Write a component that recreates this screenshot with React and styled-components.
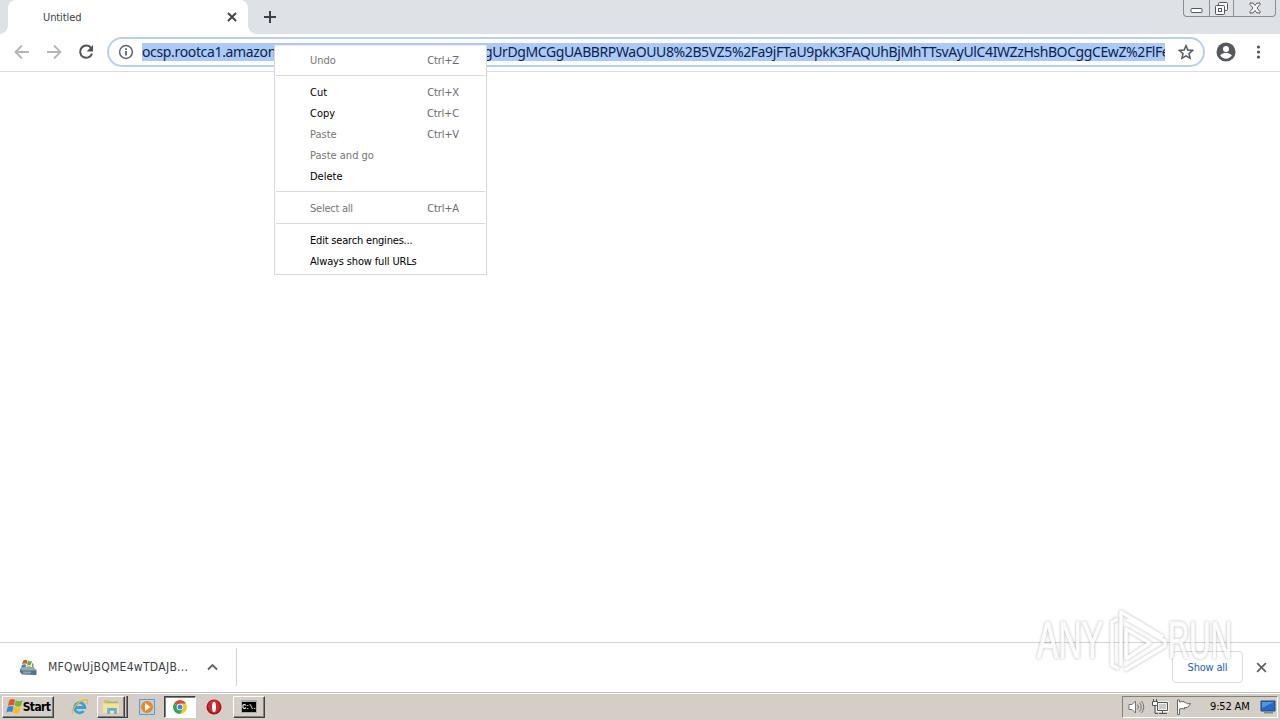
import React from "react";
import styled, { createGlobalStyle } from "styled-components";

const GlobalStyle = createGlobalStyle`
  * { box-sizing: border-box; }
  body { margin: 0; background: #fff; overflow: hidden; }
`;
const Screen = styled.div`
  position: relative;
  width: 1280px;
  height: 720px;
  display: flex;
  flex-direction: column;
  overflow: hidden;
  background: #fff;
  font-family: "DejaVu Sans Condensed", "DejaVu Sans", sans-serif;
  font-stretch: condensed;
  font-size: 11px;
  color: #000;
  svg { display: block; flex: none; }
`;
const Label = styled.span`
  white-space: pre;
  letter-spacing: ${(p) => p.$track || 0}px;
`;

const TabStrip = styled.header`
  height: 34px;
  flex: none;
  display: flex;
  padding-left: 8px;
  background: #dee1e6;
`;
const Tab = styled.div`
  width: 240px;
  display: flex;
  align-items: center;
  justify-content: space-between;
  padding: 0 11px 0 35px;
  background: #fff;
  border-radius: 8px 8px 0 0;
  color: #3c4043;
  position: relative;
  &::before, &::after {
    content: "";
    position: absolute;
    bottom: 0;
    width: 8px;
    height: 8px;
  }
  &::before { left: -8px; background: radial-gradient(circle at 0 0, #dee1e6 7.5px, #fff 8px); }
  &::after { right: -8px; background: radial-gradient(circle at 100% 0, #dee1e6 7.5px, #fff 8px); }
`;
const NewTab = styled.div`
  margin: 10px 0 0 15px;
`;
const WindowButtons = styled.div`
  display: flex;
  width: 93px;
  height: 17px;
  margin: 0 4px 0 auto;
  border: 1px solid #8a8d93;
  border-top: 0;
  border-radius: 0 0 4px 4px;
`;
const WindowButton = styled.div`
  width: ${(p) => p.$w}px;
  display: flex;
  align-items: center;
  justify-content: center;
  & + & { border-left: 1px solid #8a8d93; }
`;

const Toolbar = styled.div`
  height: 38px;
  flex: none;
  display: flex;
  align-items: center;
  padding: 0 12px 1px 14px;
  border-bottom: 1px solid #dcdee1;
  background: #fff;
`;
const NavIcons = styled.div`
  display: flex;
  gap: 16px;
  width: 93px;
`;
const Omnibox = styled.div`
  width: 1098px;
  height: 30px;
  display: flex;
  align-items: center;
  padding: 0 9px 0 9px;
  border: 2px solid #b9cff0;
  border-radius: 15px;
`;
const Url = styled.div`
  width: 1023px;
  height: 18px;
  margin: 0 13px 0 8px;
  overflow: hidden;
  display: flex;
  background: #accaf8;
  color: #0b1f48;
  font-family: "Noto Sans", sans-serif;
  font-size: 14px;
  line-height: 17px;
`;
const UrlPart = styled.span`
  flex: none;
  width: ${(p) => p.$w}px;
  overflow: hidden;
  white-space: pre;
  letter-spacing: ${(p) => p.$track}px;
`;
const ToolbarEnd = styled.div`
  display: flex;
  align-items: center;
  gap: 12px;
  margin-left: 11px;
`;

const Menu = styled.nav`
  position: absolute;
  left: 274px;
  top: 45px;
  width: 213px;
  height: 230px;
  background: #fff;
  border: 1px solid #d6d8db;
  border-top-color: #e9edf5;
  padding-top: 4px;
`;
const MenuItem = styled.div`
  height: 21px;
  display: flex;
  align-items: center;
  justify-content: space-between;
  padding: 0 27px 0 35px;
  color: ${(p) => (p.$off ? "#757575" : "#000")};
`;
const Shortcut = styled(Label)`
  color: #6b6b6b;
`;
const Rule = styled.div`
  height: 1px;
  margin: 4px 1px 6px;
  background: #d8dadd;
`;

const Page = styled.main`
  flex: 1;
`;
const Shelf = styled.section`
  height: 50px;
  flex: none;
  display: flex;
  align-items: center;
  border-top: 1px solid #d3d5d8;
  padding: 0 13px 1px 20px;
`;
const Download = styled.div`
  width: 217px;
  height: 38px;
  display: flex;
  align-items: center;
  border-right: 1px solid #d3d5d8;
  color: #3c4043;
  font-size: 12px;
`;
const FileName = styled(Label)`
  width: 170px;
  flex: none;
  padding-left: 11px;
`;
const ShowAll = styled.div`
  width: 71px;
  height: 32px;
  margin: 0 13px 0 auto;
  display: flex;
  align-items: center;
  justify-content: center;
  border: 1px solid #dadce0;
  border-radius: 4px;
  color: #1a5fc8;
`;

const Taskbar = styled.footer`
  height: 28px;
  flex: none;
  display: flex;
  align-items: center;
  padding: 2px 2px 2px 2px;
  background: #d4cec6;
  border-top: 1px solid #c2beb9;
  box-shadow: inset 0 1px #fff;
`;
const Raised = styled.div`
  width: ${(p) => p.$w}px;
  height: 22px;
  margin-left: ${(p) => p.$gap || 0}px;
  display: flex;
  align-items: center;
  justify-content: center;
  background: ${(p) => (p.$pressed ? "#fff" : "#d4cec6")};
  border: 1px solid;
  border-color: ${(p) => (p.$pressed ? "#404040 #fff #fff #404040" : "#fff #404040 #404040 #fff")};
  box-shadow: ${(p) => (p.$pressed ? "inset 1px 1px #808080" : "inset -1px -1px #808080")};
`;
const Stack = styled.div`
  width: 3px;
  height: 22px;
  border-right: 1px solid #404040;
  border-bottom: 1px solid #404040;
  box-shadow: inset -1px 0 #808080;
`;
const StartText = styled(Label)`
  font-weight: bold;
  font-size: 12px;
`;
const Bare = styled.div`
  margin-left: ${(p) => p.$gap}px;
`;
const Tray = styled.div`
  width: 156px;
  height: 22px;
  margin-left: auto;
  display: flex;
  align-items: center;
  padding-left: 5px;
  border: 1px solid;
  border-color: #808080 #fff #fff #808080;
`;
const Clock = styled(Label)`
  width: 41px;
  margin: 0 9px 0 17px;
`;

const Watermark = styled.div`
  position: absolute;
  left: 1037px;
  top: 607px;
  width: 200px;
  height: 67px;
  display: flex;
  align-items: center;
  opacity: 0.8;
  filter: drop-shadow(0 0 1.5px rgba(0, 0, 0, 0.36));
`;
const Word = styled.span`
  width: ${(p) => p.$w}px;
  flex: none;
  font: 51px/67px "Liberation Sans", sans-serif;
  color: #fcfcfc;
  -webkit-text-stroke: 1px #fcfcfc;
  white-space: nowrap;
  transform: scaleX(${(p) => p.$sx});
  transform-origin: 0 50%;
`;

const Close = ({ s = 9, c = "#3c4043", w = 1.8 }) => (
  <svg width={s} height={s} viewBox="0 0 10 10"><path d="M1 1l8 8M9 1l-8 8" stroke={c} strokeWidth={w} /></svg>
);
const Arrow = ({ flip }) => (
  <svg width="16" height="16" viewBox="0 0 16 16" fill="none" stroke="#b4b6b9" strokeWidth="1.8">
    <path d={flip ? "M1 8h13M8 1.5L14.5 8 8 14.5" : "M15 8H2M8 1.5L1.5 8 8 14.5"} />
  </svg>
);
const Reload = () => (
  <svg width="16" height="16" viewBox="0 0 16 16">
    <path d="M13.2 4.1A6.1 6.1 0 1 0 14 9.7" fill="none" stroke="#505357" strokeWidth="2" />
    <path d="M15 1v6.4H8.6z" fill="#505357" />
  </svg>
);
const Info = () => (
  <svg width="16" height="16" viewBox="0 0 16 16">
    <circle cx="8" cy="8" r="6.4" fill="none" stroke="#5f6368" strokeWidth="1.5" />
    <path d="M8 7v4.500M8 4.200v1.700" stroke="#5f6368" strokeWidth="1.800" />
  </svg>
);
const Star = () => (
  <svg width="16" height="16" viewBox="0 0 16 16">
    <path d="M8 1.700l1.800 4.400 4.800.400-3.600 3.100 1.100 4.700L8 11.800l-4.100 2.500L5 9.600 1.400 6.500l4.800-.400z" fill="none" stroke="#54575b" strokeWidth="1.500" />
  </svg>
);
const Avatar = () => (
  <svg width="20" height="20" viewBox="0 0 20 20">
    <circle cx="10" cy="10" r="9.500" fill="#55585d" />
    <circle cx="10" cy="7" r="3" fill="#fff" />
    <path d="M4.200 13.600c1.100-2 3.900-2.800 5.800-2.800s4.700.800 5.800 2.800A7 7 0 0 1 10 16.700a7 7 0 0 1-5.800-3.100z" fill="#fff" />
  </svg>
);
const Dots = () => (
  <svg width="20" height="16" viewBox="0 0 20 16" fill="#505357">
    <circle cx="10.500" cy="3" r="1.600" /><circle cx="10.500" cy="8" r="1.600" /><circle cx="10.500" cy="13" r="1.600" />
  </svg>
);
const Flag = ({ s }) => (
  <svg width={s} height={s} viewBox="0 0 18 18">
    <path d="M3.500 2.500Q6.500 0 9.500 2L8.200 8Q5 6.500 2 8.500z" fill="#e2562b" />
    <path d="M10.500 2.500Q13.500 4.500 17.500 2.500L15.700 8.500Q12 10 9 8z" fill="#75b52f" />
    <path d="M1.700 9.500Q5 7.500 8 9.200L6.500 15Q3.500 13.500 .3 15.500z" fill="#3984d2" />
    <path d="M8.900 9.300Q12 11.200 15.500 9.500L13.800 15.500Q10.500 17.500 7.300 15z" fill="#f3bd25" />
  </svg>
);
const Installer = () => (
  <svg width="17" height="17" viewBox="0 0 17 17">
    <path d="M3 2q2-2 4.500-.500L6.500 5Q4.500 4 2 5.500z" fill="#d65b35" />
    <path d="M8 1.500q2 1.500 4 .500L11 5.500q-2 1-4 0z" fill="#65ac3b" />
    <path d="M2 6q2-1.500 4.300-.300L5.300 9 1 9.500z" fill="#3b87cb" />
    <path d="M7 6q2 1.200 4 .300L10 9.500H6z" fill="#e9b443" />
    <path d="M12 4l1.500 1v5H12z" fill="#7b9a62" />
    <path d="M0 10l3-2h10l3.500 3.500V16L2 15.500 0 13z" fill="#51718b" />
    <path d="M0 10l3-2h10l3 3.500H2z" fill="#93aab7" />
    <path d="M3 12.500h8v2H3z" fill="#8ba7b9" />
  </svg>
);
const Explorer = () => (
  <svg width="17" height="17" viewBox="0 0 16 16">
    <path d="M1 2h5l1 1h7v10H1z" fill="#d9bb65" /><path d="M3 4h11v6H3z" fill="#82bc93" />
    <path d="M0 5h15v9H0z" fill="#f5e39d" /><path d="M4 15V9.500h9V15h-2.500v-3h-4v3z" fill="#66afd1" />
  </svg>
);
const IE = () => (
  <svg width="18" height="18" viewBox="0 0 18 18" fill="none">
    <path d="M4.500 9.500h9.300A5.100 5.100 0 1 0 12.700 13" stroke="#39a0dc" strokeWidth="2.800" />
    <path d="M2 15.500C-1 12 8 2 14.500 1.700c3-.2 2.200 3 1.200 4.300" stroke="#e8b738" strokeWidth="1.400" />
  </svg>
);
const Player = () => (
  <svg width="16" height="16" viewBox="0 0 16 16">
    <path d="M.5.500h15v15H.500z" fill="#b6d4ef" stroke="#6498c8" />
    <circle cx="8" cy="8" r="6" fill="#ef861e" /><path d="M6 4l5.500 4L6 12z" fill="#fff" />
  </svg>
);
const Chrome = () => (
  <svg width="14" height="14" viewBox="0 0 14 14">
    <path d="M7 7L1 3.500A7 7 0 0 1 13 3.500z" fill="#df4937" />
    <path d="M7 7V3.500h6A7 7 0 0 1 7 14z" fill="#f4c52d" />
    <path d="M1 3.500A7 7 0 0 0 6.800 14L10 8.700 7 7z" fill="#35a45a" />
    <circle cx="7" cy="7" r="3.300" fill="#fff" /><circle cx="7" cy="7" r="2.500" fill="#4286e5" />
  </svg>
);
const Opera = () => (
  <svg width="16" height="16" viewBox="0 0 16 16">
    <circle cx="8" cy="8" r="7.500" fill="#a8131b" /><ellipse cx="8" cy="7.500" rx="6" ry="6.500" fill="#cf2931" />
    <ellipse cx="8" cy="8" rx="2" ry="5.300" fill="#fff" />
  </svg>
);
const ConsoleIcon = styled.div`
  width: 16px;
  height: 13px;
  background: #000;
  border: 1px solid #aaa;
  border-top-width: 2px;
  color: #fff;
  font: bold 7px/10px "Liberation Mono", monospace;
  letter-spacing: -0.7px;
  white-space: nowrap;
`;
const Volume = () => (
  <svg width="17" height="16" viewBox="0 0 17 16" fill="none" stroke="#747474">
    <path d="M1 5.500h3L7.500 2v12L4 10.500H1z" fill="#fff" /><path d="M9.500 5.500q2 2.500 0 5M11.500 3.500q3.500 4.500 0 9M13.500 2q4.500 6 0 12" />
  </svg>
);
const Network = () => (
  <svg width="17" height="16" viewBox="0 0 17 16" fill="none" stroke="#555">
    <path d="M5.500 3.500h10v8h-10z" fill="#c9c9c9" stroke="#fff" strokeWidth="2.500" />
    <path d="M5.500 3.500h10v8h-10zM7 14.500h8M10.500 12v2" />
    <path d="M.5 2.500h5v4h-5z" fill="#fff" /><path d="M1.500 0v2M4.500 0v2M3 7v7.500h3" />
  </svg>
);
const NoticeFlag = () => (
  <svg width="17" height="16" viewBox="0 0 17 16">
    <path d="M1.500 1v14.500h2V10q2-1 5 0V8.500q3 1.500 6-4-3 1-5-1-2-2-6-.5V1z" fill="#fff" stroke="#666" />
  </svg>
);
const Desktop = () => (
  <svg width="16" height="14" viewBox="0 0 16 14">
    <path d="M1 1h14v10H1z" fill="#2469c5" stroke="#20477f" /><path d="M2 2h12L2 8z" fill="#5097df" />
    <path d="M4 12h9v1.500H4z" fill="#888" />
  </svg>
);

const items = [
  { t: "Undo", k: "Ctrl+Z", off: true }, null,
  { t: "Cut", k: "Ctrl+X" }, { t: "Copy", k: "Ctrl+C" },
  { t: "Paste", k: "Ctrl+V", off: true }, { t: "Paste and go", off: true }, { t: "Delete" }, null,
  { t: "Select all", k: "Ctrl+A", off: true, track: -0.25 }, null,
  { t: "Edit search engines...", track: -0.19 }, { t: "Always show full URLs", track: -0.15 },
];

export default function App() {
  return (
    <Screen>
      <GlobalStyle />
      <TabStrip>
        <Tab><Label $track={-0.1}>Untitled</Label><Close s={10} /></Tab>
        <NewTab><svg width="14" height="14" viewBox="0 0 14 14"><path d="M7 1v12M1 7h12" stroke="#3c4043" strokeWidth="2" /></svg></NewTab>
        <WindowButtons>
          <WindowButton $w={25}>
            <svg width="13" height="16" viewBox="0 0 13 16"><rect x="1" y="8.500" width="11" height="4" rx="1" fill="#fff" stroke="#54565b" /></svg>
          </WindowButton>
          <WindowButton $w={25}>
            <svg width="13" height="13" viewBox="0 0 13 13" fill="#f8f8f8" stroke="#54565b"><rect x="3.500" y=".5" width="9" height="8" rx="1" /><rect x=".5" y="3.500" width="9" height="9" rx="1" /><rect x="3.500" y="6.500" width="3" height="3" /></svg>
          </WindowButton>
          <WindowButton $w={42}>
            <svg width="12" height="12" viewBox="0 0 12 12"><path d="M1 1h3l2 2.500L8 1h3v1.500L8 6l3 3.500V11H8L6 8.500 4 11H1V9.500L4 6 1 2.500z" fill="#f8f8f8" stroke="#54565b" /></svg>
          </WindowButton>
        </WindowButtons>
      </TabStrip>
      <Toolbar>
        <NavIcons><Arrow /><Arrow flip /><Reload /></NavIcons>
        <Omnibox>
          <Info />
          <Url>
            <UrlPart $w={133} $track={-0.35}>ocsp.rootca1.amazon</UrlPart>
            <UrlPart $w={209} />
            <UrlPart $w={681} $track={-0.4}>gUrDgMCGgUABBRPWaOUU8%2B5VZ5%2Fa9jFTaU9pkK3FAQUhBjMhTTsvAyUlC4IWZzHshBOCggCEwZ%2FlFe</UrlPart>
          </Url>
          <Star />
        </Omnibox>
        <ToolbarEnd><Avatar /><Dots /></ToolbarEnd>
      </Toolbar>
      <Page />
      <Shelf>
        <Download>
          <Installer />
          <FileName $track={0.29}>MFQwUjBQME4wTDAJB...</FileName>
          <svg width="11" height="8" viewBox="0 0 11 8"><path d="M1 6.500L5.500 2 10 6.500" fill="none" stroke="#5f6368" strokeWidth="1.800" /></svg>
        </Download>
        <ShowAll><Label $track={-0.2}>Show all</Label></ShowAll>
        <Close s={11} c="#5f6368" w={1.600} />
      </Shelf>
      <Taskbar>
        <Raised $w={52}><Flag s={17} /><StartText $track={-0.6}>Start</StartText></Raised>
        <Bare $gap={17}><IE /></Bare>
        <Raised $w={28} $gap={8}><Explorer /></Raised><Stack />
        <Bare $gap={11}><Player /></Bare>
        <Raised $w={32} $gap={9} $pressed><Chrome /></Raised>
        <Bare $gap={10}><Opera /></Bare>
        <Raised $w={32} $gap={11}><ConsoleIcon>C:\.</ConsoleIcon></Raised>
        <Tray>
          <Volume />
          <Bare $gap={7}><Network /></Bare>
          <Bare $gap={7}><NoticeFlag /></Bare>
          <Clock $track={-0.15}>9:52 AM</Clock>
          <Desktop />
        </Tray>
      </Taskbar>
      <Menu>
        {items.map((it, i) =>
          it ? (
            <MenuItem key={i} $off={it.off}><Label $track={it.track}>{it.t}</Label>{it.k && <Shortcut $track={-0.15}>{it.k}</Shortcut>}</MenuItem>
          ) : <Rule key={i} />
        )}
      </Menu>
      <Watermark>
        <Word $w={71} $sx={0.63}>ANY</Word>
        <svg width="60" height="67" viewBox="0 0 60 67" fill="none" stroke="#fff" strokeWidth="3.500" strokeLinejoin="round">
          <path d="M13 59V5l42 25M17 63l40-24V34L19 12M10 12l-6 3v43l7 4M18 52V22l24 14-24 16" />
        </svg>
        <Word $w={68} $sx={0.58}>RUN</Word>
      </Watermark>
    </Screen>
  );
}
